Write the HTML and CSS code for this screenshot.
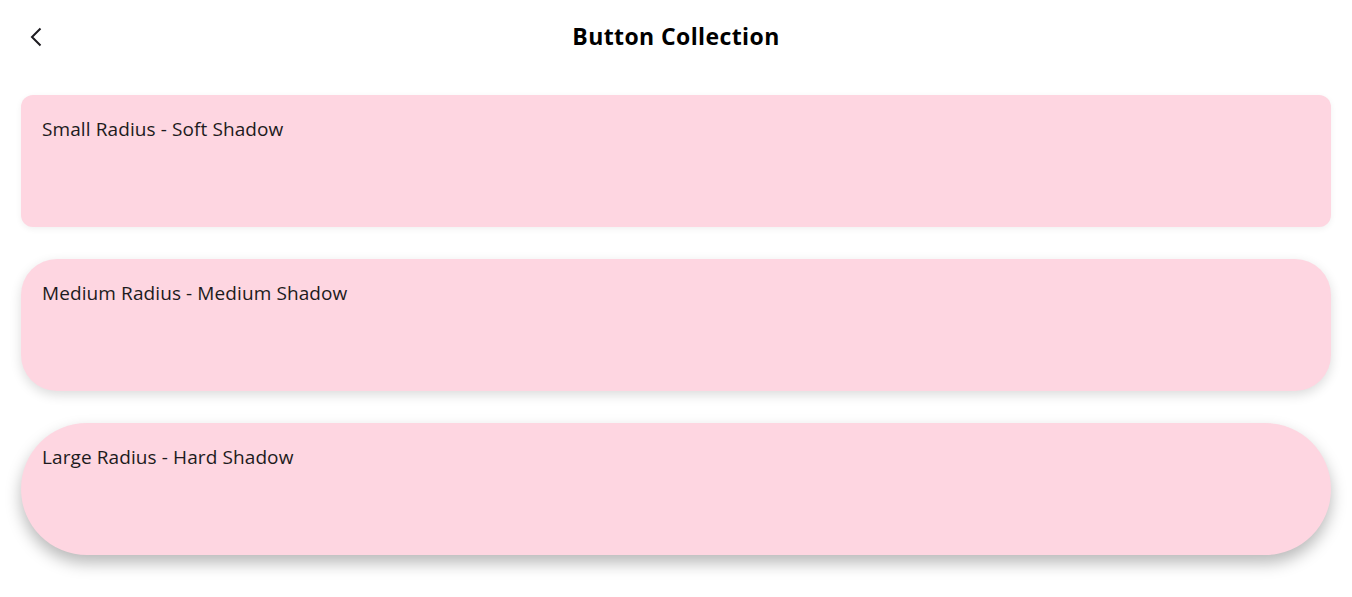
FILE: index.html
```html
<!DOCTYPE html>
<html>
<head>
<meta charset="utf-8">
<link rel="stylesheet" href="styles.css">
</head>
<body>
<header class="bar">
  <button class="back" aria-label="Back">
    <svg width="24" height="24" viewBox="0 0 24 24"><path d="M15.5 3.5 L7 12 L15.5 20.5" fill="none" stroke="#1d1b20" stroke-width="2"/></svg>
  </button>
  <h1 class="title">Button Collection</h1>
</header>
<main class="list">
  <div class="card card-small"><span class="label">Small Radius - Soft Shadow</span></div>
  <div class="card card-medium"><span class="label">Medium Radius - Medium Shadow</span></div>
  <div class="card card-large"><span class="label">Large Radius - Hard Shadow</span></div>
</main>
</body>
</html>
```

FILE: styles.css
```css
html, body {
  margin: 0;
  padding: 0;
  background: #ffffff;
  font-family: "Open Sans", "Noto Sans", sans-serif;
  color: #1d1b20;
}
.bar {
  position: relative;
  height: 72px;
  margin-bottom: 2px;
  display: flex;
  align-items: center;
  justify-content: center;
}
.back {
  position: absolute;
  left: 25px;
  top: 25px;
  width: 24px;
  height: 24px;
  padding: 0;
  border: 0;
  background: none;
  display: flex;
}
.title {
  margin: 0;
  font-size: 23px;
  font-weight: 700;
  letter-spacing: 0.4px;
  color: #000;
}
.list {
  display: flex;
  flex-direction: column;
  gap: 32px;
  padding: 21px 21px 40px 21px;
}
.card {
  height: 132px;
  box-sizing: border-box;
  padding: 21px 21px;
  background: #fed6e1;
}
.label {
  font-size: 19px;
  letter-spacing: 0.1px;
  color: #1d1b20;
}
.card-small {
  border-radius: 12px;
  box-shadow: 0 2px 6px rgba(0,0,0,0.06);
}
.card-medium {
  border-radius: 36px;
  box-shadow: 0 4px 12px rgba(0,0,0,0.14);
}
.card-large {
  border-radius: 66px;
  box-shadow: 0 8px 16px rgba(0,0,0,0.28);
}
```
